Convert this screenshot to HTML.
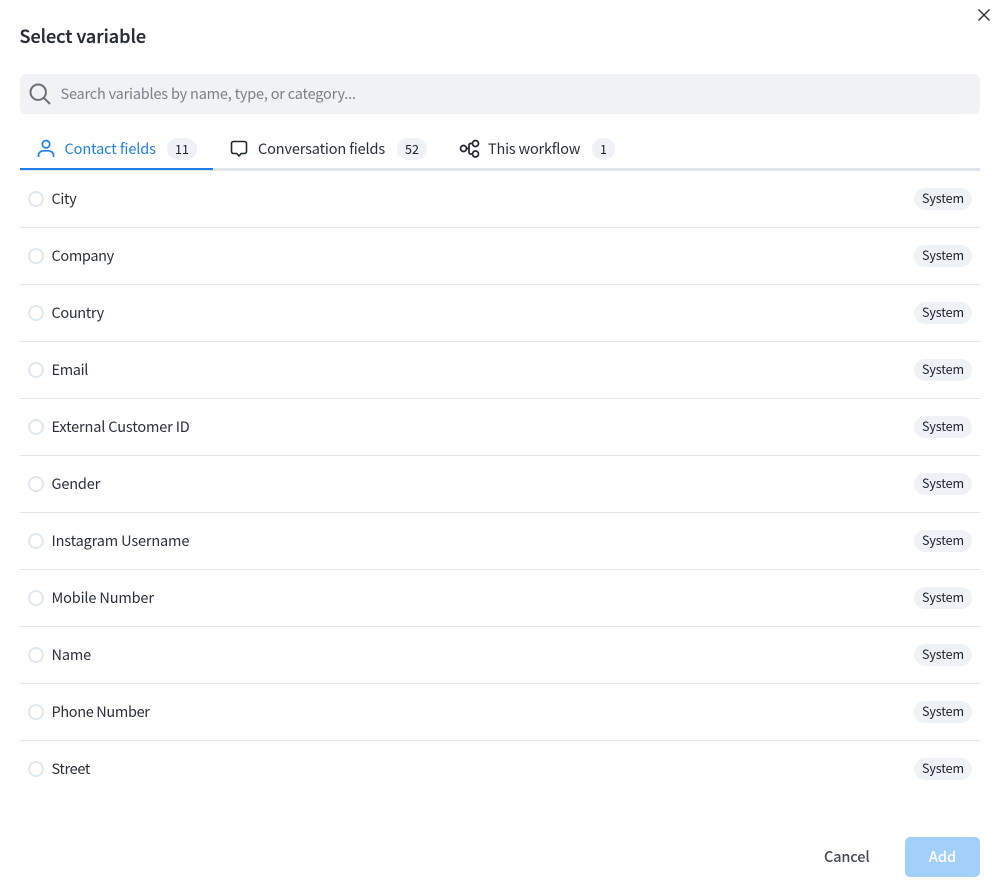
<!DOCTYPE html>
<html><head><meta charset="utf-8"><style>
*{box-sizing:border-box}
html,body{margin:0;padding:0;background:#fff}
body{width:997px;height:889px;position:relative;overflow:hidden;font-family:"Noto Sans CJK JP","Liberation Sans",sans-serif;font-size:14.5px;color:#2a2f3a;letter-spacing:-.15px}
.a{position:absolute;white-space:nowrap}
.row{position:absolute;left:20px;width:960px;height:57px;border-bottom:1px solid #e3e5e8}
.row i{position:absolute;left:8px;top:20px;width:16px;height:16px;border:2px solid #e2e8f0;border-radius:50%}
.row span{position:absolute;left:31.5px;top:18px;line-height:20px}
.row span.n{letter-spacing:-.35px}
.row b{position:absolute;left:894px;top:17px;width:58px;height:22px;border-radius:11px;background:#eef2f6;font-weight:400;font-size:12.5px;line-height:20px;text-align:center;letter-spacing:-.1px;color:#1a1e27}
.row.l{border-bottom:0}
.c{position:absolute;top:138px;height:22px;border-radius:11px;background:#eef2f6;font-size:12.5px;line-height:22px;text-align:center;color:#1a1e27;letter-spacing:0}
</style></head><body>
<svg class="a" style="left:977px;top:8px" width="14" height="14" viewBox="0 0 14 14" fill="none" stroke="#2a2f3a" stroke-width="1.4"><path d="M1.500 1.500L12.500 12.500M12.500 1.500L1.500 12.500"/></svg>
<div class="a" style="left:19.500px;top:24px;font-size:18px;line-height:24px;font-weight:500;color:#262b36;letter-spacing:0;-webkit-text-stroke:.25px #262b36">Select variable</div>
<div class="a" style="left:20px;top:74px;width:960px;height:40px;background:#f1f2f4;border-radius:6px"></div>
<svg class="a" style="left:29px;top:83px" width="22" height="22" viewBox="0 0 22 22" fill="none" stroke="#6b7078" stroke-width="2"><circle cx="9.200" cy="9.200" r="7.700"/><path d="M14.800 14.800L21 21"/></svg>
<div class="a" style="left:60.500px;top:84px;line-height:20px;color:#7b8087;letter-spacing:-.2px">Search variables by name, type, or category...</div>

<svg class="a" style="left:37px;top:139px" width="18" height="19" viewBox="0 0 18 19" fill="none" stroke="#1f7fe8" stroke-width="1.700"><circle cx="9" cy="5.200" r="3.700"/><path d="M1.500 18v-1.500c0-3 2.500-4.700 5-4.700h5c2.500 0 5 1.700 5 4.700V18"/></svg>
<div class="a" style="left:64.500px;top:139px;line-height:20px;color:#1f7fe8;letter-spacing:-.1px">Contact fields</div>
<div class="c" style="left:167px;width:30px">11</div>
<svg class="a" style="left:230px;top:140px" width="18" height="18" viewBox="0 0 18 18" fill="none" stroke="#23272f" stroke-width="1.600" stroke-linejoin="round"><path d="M3.500 1.500h11a2 2 0 0 1 2 2v8a2 2 0 0 1-2 2h-3.300L9 16l-2.200-2.500H3.500a2 2 0 0 1-2-2v-8a2 2 0 0 1 2-2z"/></svg>
<div class="a" style="left:258px;top:139px;line-height:20px;letter-spacing:-.14px">Conversation fields</div>
<div class="c" style="left:397px;width:30px">52</div>
<svg class="a" style="left:459px;top:139px" width="21" height="19" viewBox="0 0 21 19" fill="none" stroke="#23272f" stroke-width="1.700"><circle cx="4.500" cy="9.500" r="3"/><circle cx="16.500" cy="4.500" r="3"/><circle cx="16.500" cy="15" r="3"/><path d="M7.500 9.500h2.500M13.500 4.500h-2a1.500 1.500 0 0 0-1.500 1.500v7.500a1.500 1.500 0 0 0 1.500 1.500h2"/></svg>
<div class="a" style="left:488px;top:139px;line-height:20px;letter-spacing:-.19px">This workflow</div>
<div class="c" style="left:592px;width:23px">1</div>
<div class="a" style="left:20px;top:168px;width:960px;height:3px;background:#e1e6ed"></div>
<div class="a" style="left:20px;top:168px;width:193px;height:2px;background:#1f7fe8"></div>

<div class="row" style="top:171px"><i></i><span class="n">City</span><b>System</b></div>
<div class="row" style="top:228px"><i></i><span class="n">Company</span><b>System</b></div>
<div class="row" style="top:285px"><i></i><span class="n">Country</span><b>System</b></div>
<div class="row" style="top:342px"><i></i><span class="n">Email</span><b>System</b></div>
<div class="row" style="top:399px"><i></i><span>External Customer ID</span><b>System</b></div>
<div class="row" style="top:456px"><i></i><span>Gender</span><b>System</b></div>
<div class="row" style="top:513px"><i></i><span>Instagram Username</span><b>System</b></div>
<div class="row" style="top:570px"><i></i><span>Mobile Number</span><b>System</b></div>
<div class="row" style="top:627px"><i></i><span>Name</span><b>System</b></div>
<div class="row" style="top:684px"><i></i><span class="n">Phone Number</span><b>System</b></div>
<div class="row l" style="top:741px"><i></i><span class="n">Street</span><b>System</b></div>

<div class="a" style="left:824px;top:847px;line-height:20px;color:#444952;font-weight:500;letter-spacing:-.15px">Cancel</div>
<div class="a" style="left:905px;top:837px;width:75px;height:40px;border-radius:5px;background:#a3d0fb;color:#fff;line-height:40px;text-align:center;font-weight:500;letter-spacing:0">Add</div>
</body></html>
